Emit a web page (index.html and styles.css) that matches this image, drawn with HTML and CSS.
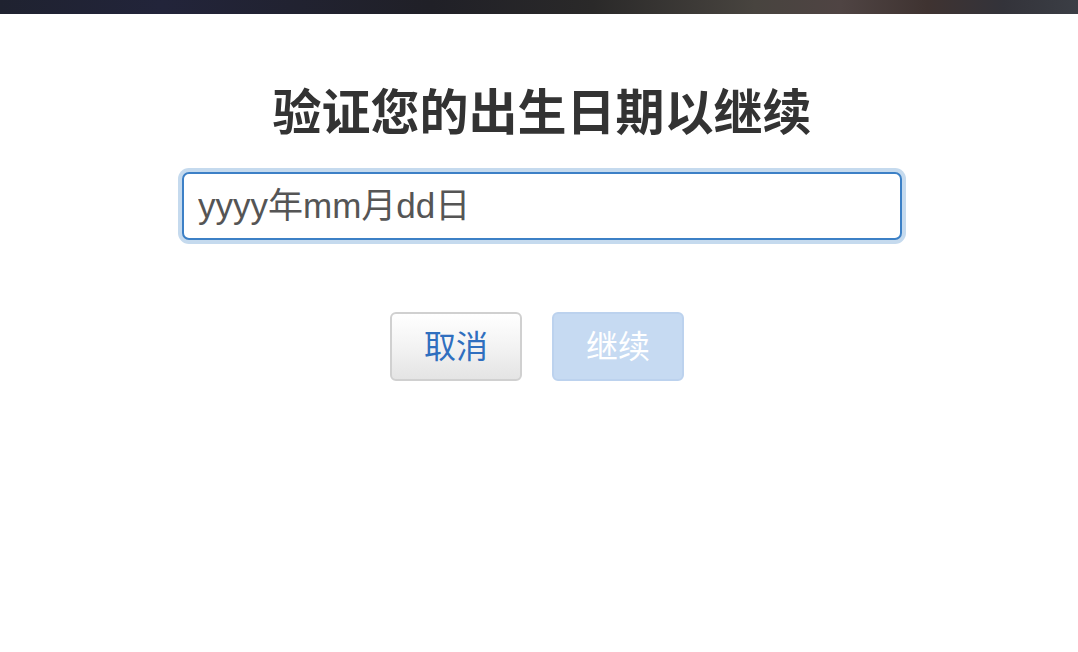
FILE: index.html
```html
<!DOCTYPE html>
<html lang="zh-CN">
<head>
<meta charset="utf-8">
<title>验证您的出生日期以继续</title>
<link rel="stylesheet" href="styles.css">
</head>
<body>
<div class="topbar"></div>
<main class="dialog">
  <h1 class="title">验证您的出生日期以继续</h1>
  <div class="field">
    <input class="date-input" type="text" placeholder="yyyy年mm月dd日">
  </div>
  <div class="actions">
    <button class="btn btn-cancel" type="button">取消</button>
    <button class="btn btn-continue" type="button" disabled>继续</button>
  </div>
</main>
</body>
</html>
```

FILE: styles.css
```css
html, body {
  margin: 0;
  padding: 0;
  background: #ffffff;
}
body {
  font-family: "Liberation Sans", "Noto Sans CJK SC", sans-serif;
  width: 1078px;
  height: 652px;
  overflow: hidden;
}
.topbar {
  height: 14px;
  background: linear-gradient(90deg, #1f2230 0%, #22243a 15%, #202027 40%, #2a2929 55%, #48443f 70%, #4f4443 78%, #3f3331 86%, #33333a 93%, #3b3e45 100%);
}
.dialog {
  display: flex;
  flex-direction: column;
  align-items: center;
  padding-top: 64px;
  padding-left: 6px;
}
.title {
  margin: 0;
  font-family: "Noto Sans CJK SC", sans-serif;
  font-weight: 700;
  font-size: 49px;
  line-height: 62px;
  color: #333333;
}
.field {
  margin-top: 32px;
}
.date-input {
  box-sizing: border-box;
  display: block;
  width: 720px;
  height: 68px;
  border: 2px solid #3c80c6;
  border-radius: 7px;
  box-shadow: 0 0 0 4px #c5daee;
  padding: 0 14px;
  font-family: "Liberation Sans", "Noto Sans CJK SC", sans-serif;
  font-size: 35px;
  color: #444;
  outline: none;
  background: #fff;
}
.date-input::placeholder {
  color: #555555;
  opacity: 1;
}
.actions {
  display: flex;
  gap: 30px;
  margin-top: 72px;
  margin-right: 10px;
}
.btn {
  box-sizing: border-box;
  width: 132px;
  height: 69px;
  border-radius: 6px;
  font-family: "Noto Sans CJK SC", sans-serif;
  font-size: 32px;
  padding: 0 0 5px;
  cursor: pointer;
}
.btn-cancel {
  background: linear-gradient(180deg, #ffffff 0%, #f3f3f3 50%, #e4e4e4 100%);
  border: 2px solid #d0d0d0;
  color: #2f6fbf;
}
.btn-continue {
  background: #c6daf2;
  border: 2px solid #bcd2ee;
  color: #ffffff;
}
```
